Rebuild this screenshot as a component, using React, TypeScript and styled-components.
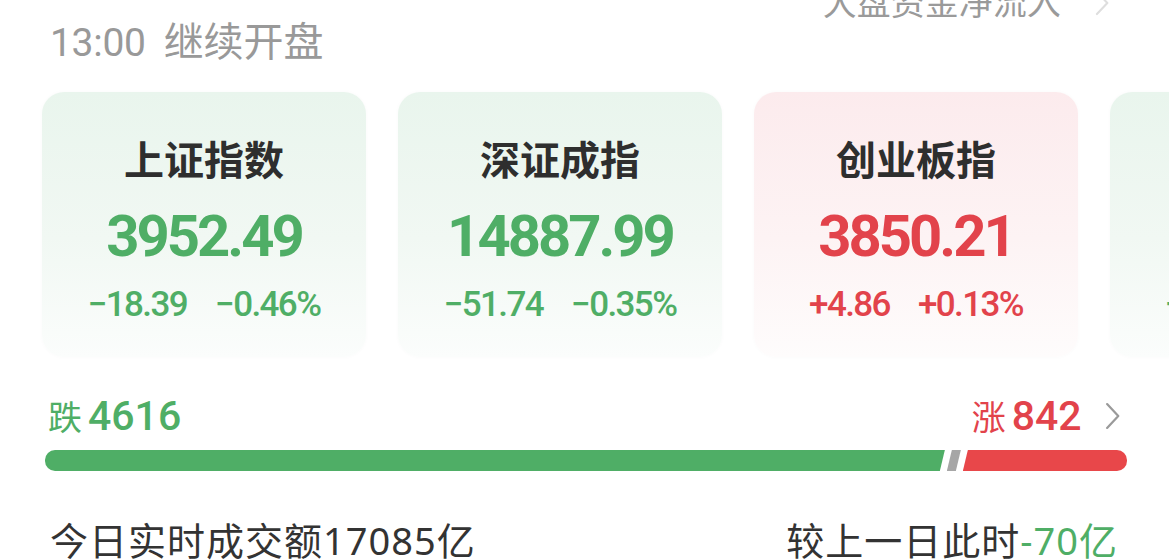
import styled, { createGlobalStyle } from "styled-components";

const GREEN = "#4fae66";
const RED = "#e2434b";

type Trend = "up" | "down";

interface IndexQuote {
  name: string;
  price: string;
  change: string;
  percent: string;
  trend: Trend;
}

const quotes: IndexQuote[] = [
  { name: "上证指数", price: "3952.49", change: "−18.39", percent: "−0.46%", trend: "down" },
  { name: "深证成指", price: "14887.99", change: "−51.74", percent: "−0.35%", trend: "down" },
  { name: "创业板指", price: "3850.21", change: "+4.86", percent: "+0.13%", trend: "up" },
  { name: "科创50", price: "1389.62", change: "−7.15", percent: "−0.51%", trend: "down" },
];

const fallCount = 4616;
const riseCount = 842;

const GlobalStyle = createGlobalStyle`
  html, body {
    margin: 0;
    padding: 0;
    background: #fff;
  }
  body {
    font-family: Roboto, "Noto Sans CJK SC", sans-serif;
    overflow: hidden;
  }
`;

const Chevron = ({ color, size }: { color: string; size: number }) => (
  <svg width={size * 0.55} height={size} viewBox="0 0 11 20" fill="none">
    <path d="M1.5 1.5 L9.5 10 L1.5 18.5" stroke={color} strokeWidth="1.6" strokeLinecap="round" strokeLinejoin="round" />
  </svg>
);

export default function App() {
  const total = fallCount + riseCount;
  return (
    <>
      <GlobalStyle />
      <Page>
        <Header>
          <TimeLabel>
            <TimeDigits>13:00</TimeDigits>
            <span>继续开盘</span>
          </TimeLabel>
          <FlowLink>
            大盘资金净流入
            <Chevron color="#dedede" size={26} />
          </FlowLink>
        </Header>

        <CardRow>
          {quotes.map((q) => (
            <Card key={q.name} $trend={q.trend}>
              <CardTitle>{q.name}</CardTitle>
              <Price $trend={q.trend}>{q.price}</Price>
              <ChangeRow $trend={q.trend}>
                <span>{q.change}</span>
                <span>{q.percent}</span>
              </ChangeRow>
            </Card>
          ))}
        </CardRow>

        <BreadthRow>
          <Count $trend="down">
            <CountLabel>跌</CountLabel>
            <CountValue>{fallCount}</CountValue>
          </Count>
          <Count $trend="up">
            <CountLabel>涨</CountLabel>
            <CountValue>{riseCount}</CountValue>
            <ChevronWrap>
              <Chevron color="#9a9a9a" size={28} />
            </ChevronWrap>
          </Count>
        </BreadthRow>

        <Bar>
          <FallPart style={{ flexGrow: fallCount / total }} />
          <FlatPart />
          <RisePart style={{ flexGrow: riseCount / total }} />
        </Bar>

        <TurnoverRow>
          <span>今日实时成交额17085亿</span>
          <span>
            较上一日此时<Diff>-70亿</Diff>
          </span>
        </TurnoverRow>
      </Page>
    </>
  );
}

const Page = styled.div`
  width: 1169px;
  height: 560px;
  box-sizing: border-box;
  padding: 0 42px;
  overflow: hidden;
`;

const Header = styled.div`
  display: flex;
  justify-content: space-between;
  align-items: flex-start;
  height: 92px;
  padding-left: 8px;
`;

const TimeLabel = styled.div`
  display: flex;
  align-items: baseline;
  gap: 18px;
  margin-top: 16px;
  font-family: "Noto Sans CJK SC", sans-serif;
  font-size: 40px;
  line-height: 46px;
  color: #999;
`;

const TimeDigits = styled.span`
  font-family: Roboto, sans-serif;
  font-size: 39px;
  font-weight: 400;
  letter-spacing: -0.3px;
`;

const FlowLink = styled.div`
  display: flex;
  align-items: center;
  gap: 34px;
  margin-top: -18px;
  margin-right: 18px;
  font-size: 34px;
  line-height: 42px;
  color: #9a9a9a;
`;

const CardRow = styled.div`
  display: flex;
  gap: 32px;
`;

const Card = styled.div<{ $trend: Trend }>`
  flex: 0 0 324px;
  height: 265px;
  box-sizing: border-box;
  padding-top: 44px;
  border-radius: 22px;
  display: flex;
  flex-direction: column;
  align-items: center;
  background: ${({ $trend }) =>
    $trend === "up"
      ? "linear-gradient(180deg, #fcebed 0%, #fdf3f4 55%, #fefcfc 100%)"
      : "linear-gradient(180deg, #e9f5ed 0%, #f1f8f3 55%, #fbfdfc 100%)"};
  box-shadow: 0 0 4px rgba(0, 0, 0, 0.025);
`;

const CardTitle = styled.div`
  font-family: "Noto Sans CJK SC", sans-serif;
  font-size: 40px;
  line-height: 44px;
  font-weight: 700;
  color: #2e2e2e;
`;

const Price = styled.div<{ $trend: Trend }>`
  margin-top: 26px;
  font-family: Roboto, sans-serif;
  font-size: 58px;
  line-height: 60px;
  font-weight: 700;
  letter-spacing: -3px;
  color: ${({ $trend }) => ($trend === "up" ? RED : GREEN)};
`;

const ChangeRow = styled.div<{ $trend: Trend }>`
  margin-top: 19px;
  display: flex;
  gap: 28px;
  font-family: Roboto, sans-serif;
  font-size: 35px;
  line-height: 40px;
  font-weight: 500;
  letter-spacing: -1.6px;
  color: ${({ $trend }) => ($trend === "up" ? RED : GREEN)};
`;

const BreadthRow = styled.div`
  margin-top: 35px;
  height: 48px;
  display: flex;
  justify-content: space-between;
  align-items: center;
  padding: 0 7px 0 6px;
`;

const Count = styled.div<{ $trend: Trend }>`
  display: flex;
  align-items: center;
  gap: 6px;
  color: ${({ $trend }) => ($trend === "up" ? RED : GREEN)};
`;

const CountLabel = styled.span`
  font-family: "Noto Sans CJK SC", sans-serif;
  font-size: 34px;
  line-height: 48px;
`;

const CountValue = styled.span`
  font-family: Roboto, sans-serif;
  font-size: 41px;
  line-height: 48px;
  font-weight: 500;
`;

const ChevronWrap = styled.span`
  display: flex;
  margin-left: 17px;
`;

const Bar = styled.div`
  margin: 10px 0 0 3px;
  height: 21px;
  border-radius: 10px;
  overflow: hidden;
  display: flex;
  gap: 2px;
`;

const FallPart = styled.div`
  background: ${GREEN};
  clip-path: polygon(0 0, 100% 0, calc(100% - 5px) 100%, 0 100%);
`;

const FlatPart = styled.div`
  flex: 0 0 14px;
  background: #a6a6a6;
  clip-path: polygon(5px 0, 100% 0, calc(100% - 5px) 100%, 0 100%);
`;

const RisePart = styled.div`
  background: #e8474a;
  clip-path: polygon(5px 0, 100% 0, 100% 100%, 0 100%);
`;

const TurnoverRow = styled.div`
  margin-top: 45px;
  display: flex;
  justify-content: space-between;
  padding: 0 9px 0 8px;
  font-family: "Noto Sans", "Noto Sans CJK SC", sans-serif;
  font-size: 38px;
  line-height: 48px;
  letter-spacing: 1px;
  color: #333;
`;

const Diff = styled.span`
  color: ${GREEN};
`;
